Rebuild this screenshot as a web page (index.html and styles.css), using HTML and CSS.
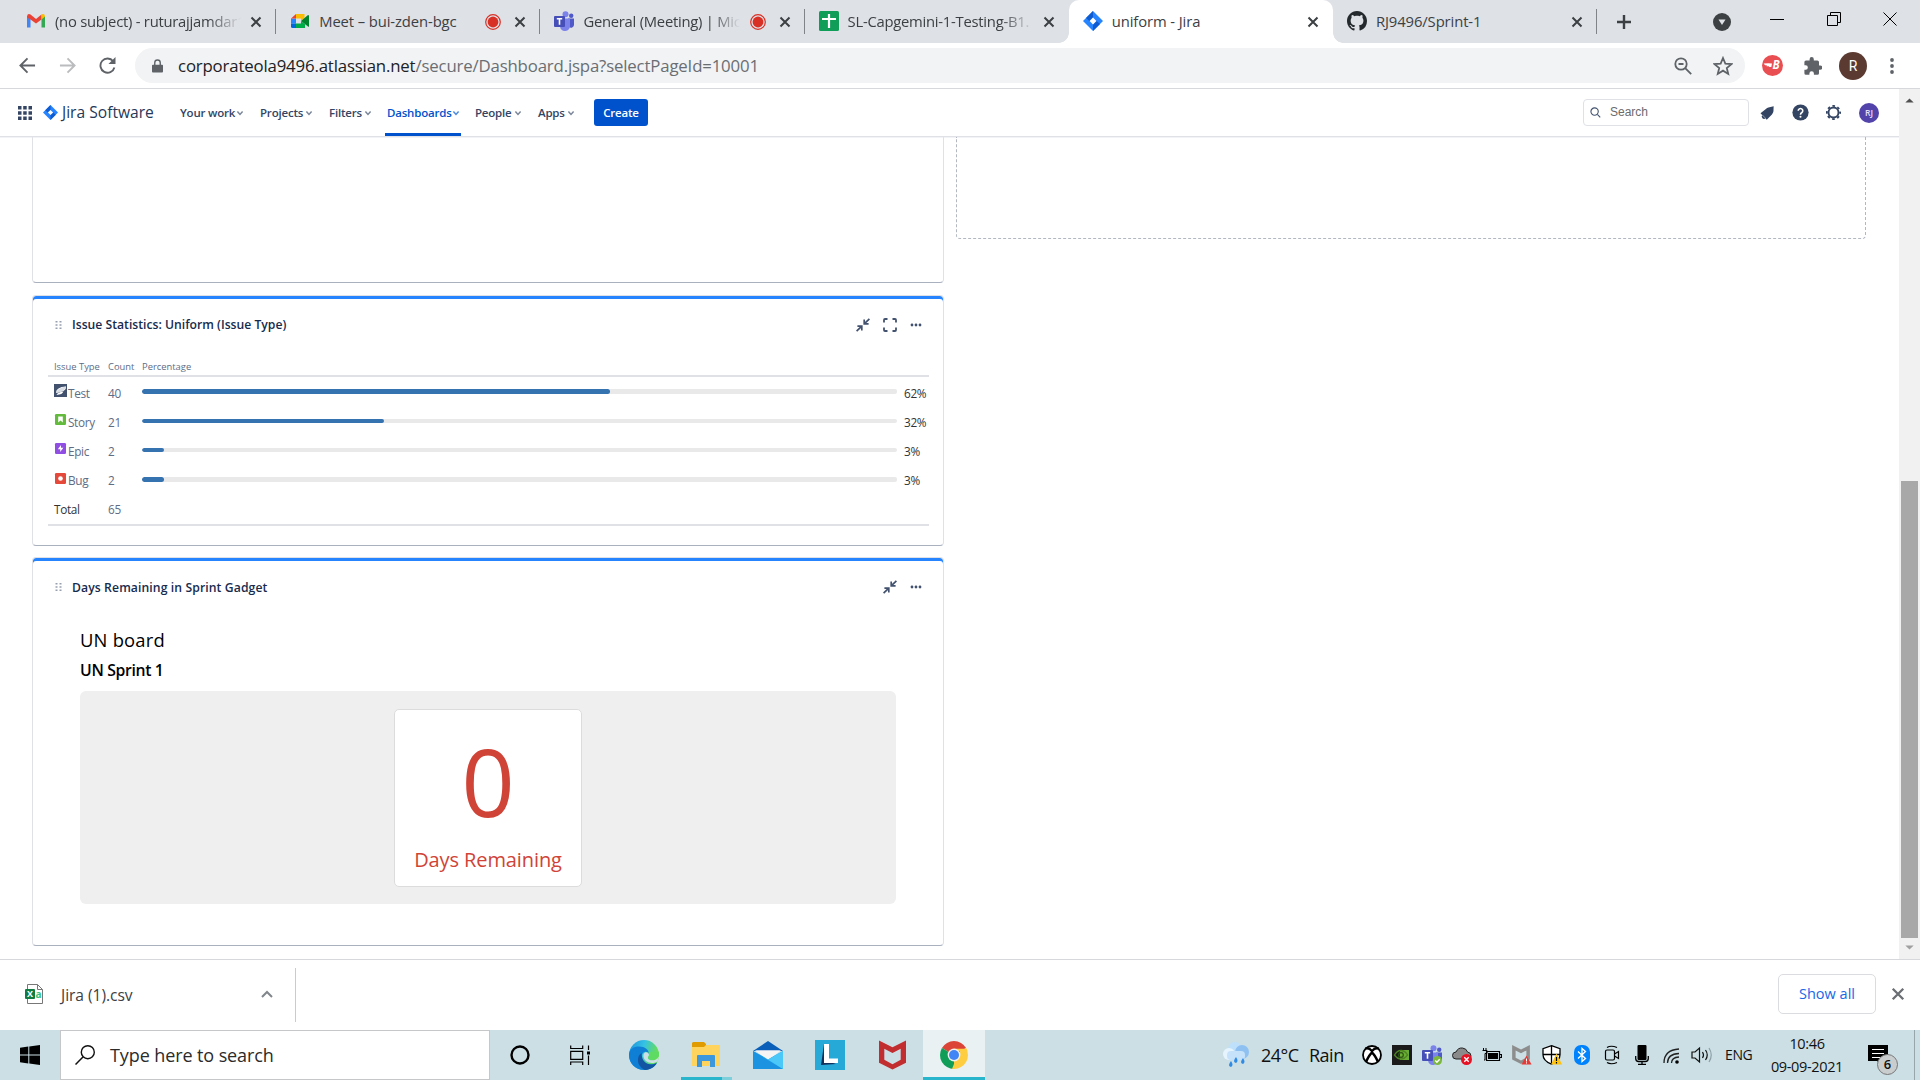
FILE: index.html
```html
<!DOCTYPE html>
<html lang="en">
<head>
<meta charset="utf-8">
<title>uniform - Jira</title>
<link rel="stylesheet" href="styles.css">
</head>
<body>
<svg class="defs" width="0" height="0">
  <defs>
    <symbol id="x" viewBox="0 0 12 12"><path d="M1.5 1.5l9 9M10.5 1.5l-9 9" fill="none" stroke="currentColor" stroke-width="2"/></symbol>
    <symbol id="rec" viewBox="0 0 18 18"><circle cx="9" cy="9" r="7.3" fill="none" stroke="#d93025" stroke-width="1.2"/><circle cx="9" cy="9" r="5.4" fill="#d93025"/></symbol>
    <symbol id="chev" viewBox="0 0 8 8"><path d="M1.4 2.6L4 5.4l2.6-2.8" fill="none" stroke="currentColor" stroke-width="1.5"/></symbol>
    <symbol id="jira" viewBox="0 0 20 20"><path d="M10 0l10 10-10 10L0 10z" fill="#2684ff"/><path d="M10 0v6.4L6.4 10 3 7z" fill="#0f5bd0"/><path d="M10 20v-6.4l3.6-3.6L17 13z" fill="#0f5bd0"/><path d="M10 6.6l3.4 3.4-3.4 3.4L6.6 10z" fill="#fff"/></symbol>
    <symbol id="collapse" viewBox="0 0 14 14"><path d="M13.400.8L9 5.200M8.200 1.600v4.200h4.400M.6 13.200L5 8.800M1.400 8.200h4.400v4.300" fill="none" stroke="#42526e" stroke-width="1.700"/></symbol>
    <symbol id="more" viewBox="0 0 12 4"><g fill="#42526e"><circle cx="2" cy="2" r="1.400"/><circle cx="6" cy="2" r="1.400"/><circle cx="10" cy="2" r="1.400"/></g></symbol>
    <symbol id="handle" viewBox="0 0 7 10"><g fill="#97a0af"><path d="M.5 1h2v1.500h-2zM4.500 1h2v1.500h-2zM.5 4.300h2v1.500h-2zM4.500 4.300h2v1.500h-2zM.5 7.600h2v1.500h-2zM4.500 7.600h2v1.500h-2z"/></g></symbol>
    <symbol id="teams" viewBox="0 0 20 20"><circle cx="17.200" cy="4.800" r="2.200" fill="#5059c9"/><circle cx="11.500" cy="3.200" r="3" fill="#7b83eb"/><path d="M14 7.500h6v6.500a3 3 0 0 1-5 2z" fill="#5059c9"/><path d="M6 7.500h10v7a5 5 0 0 1-10 1z" fill="#7b83eb"/><rect y="5" width="11" height="11" rx="1" fill="#464eb8"/><path d="M2.800 7.800h5.400M5.500 7.800v6" stroke="#fff" stroke-width="1.600"/></symbol>
    <symbol id="shieldm" viewBox="0 0 28 30"><path d="M0 0l14 7L28 0v23l-14 7-14-7z" fill="currentColor"/><path d="M5.500 8.500L14 13l8.500-4.500v11.500L14 24.500 5.500 20z" fill="var(--hole)"/></symbol>
  </defs>
</svg>

<div class="tabs">
  <div class="tab">
    <svg class="fav" viewBox="0 0 20 20"><path d="M1 16.500V5l3.500 2.500v9z" fill="#4285f4"/><path d="M15.500 7.500L19 5v11.500h-3.500z" fill="#34a853"/><path d="M1 5.500Q1.500 2 4.500 3.500L10 8l5.500-4.500v5L10 12.500l-5.500-4-3.500-2z" fill="#ea4335"/><path d="M15.500 3.500Q18.500 2 19 5.500l-3.500 3z" fill="#fbbc04"/></svg>
    <span class="name fade">(no subject) - ruturajjamdar1</span>
    <svg class="close"><use href="#x"/></svg>
  </div>
  <div class="tab">
    <svg class="fav" viewBox="0 0 20 20"><path d="M6 3h8.500v4L11 10V7.500H6z" fill="#fbbc04"/><path d="M1 7.500h5v5H1z" fill="#2684fc"/><path d="M6 3v4.500H1z" fill="#ea4335"/><path d="M1 12.500h5V17H2.500Q1 17 1 15.500z" fill="#0066da"/><path d="M6 12.500h5V10l4 3.300V17H6z" fill="#00ac47"/><path d="M11 10l7-6q1 0 1 1v10.500q-.5.500-1 0z" fill="#00832d"/></svg>
    <span class="name">Meet – bui-zden-bgc</span>
    <svg class="rec"><use href="#rec"/></svg>
    <svg class="close"><use href="#x"/></svg>
  </div>
  <div class="tab">
    <svg class="fav"><use href="#teams"/></svg>
    <span class="name fade">General (Meeting) | Mic</span>
    <svg class="rec"><use href="#rec"/></svg>
    <svg class="close"><use href="#x"/></svg>
  </div>
  <div class="tab nosep">
    <svg class="fav" viewBox="0 0 20 20"><rect width="20" height="20" rx="1.500" fill="#0f9d58"/><path d="M10 3v14M3 8h14" stroke="#fff" stroke-width="2.200"/></svg>
    <span class="name fade">SL-Capgemini-1-Testing-B1.</span>
    <svg class="close"><use href="#x"/></svg>
  </div>
  <div class="tab active">
    <svg class="fav"><use href="#jira"/></svg>
    <span class="name">uniform - Jira</span>
    <svg class="close"><use href="#x"/></svg>
  </div>
  <div class="tab">
    <svg class="fav" viewBox="0 0 16 16"><path fill="#24292e" d="M8 0C3.580 0 0 3.580 0 8c0 3.540 2.290 6.530 5.470 7.590.4.070.55-.17.55-.38 0-.19-.01-.82-.01-1.490-2.010.37-2.530-.49-2.690-.94-.09-.23-.48-.94-.82-1.130-.28-.15-.68-.52-.01-.53.63-.01 1.080.58 1.230.82.72 1.210 1.870.87 2.330.66.07-.52.28-.87.51-1.070-1.780-.2-3.640-.89-3.640-3.950 0-.87.31-1.590.82-2.150-.08-.2-.36-1.020.08-2.120 0 0 .67-.21 2.200.82.640-.18 1.320-.27 2-.27s1.360.09 2 .27c1.530-1.040 2.200-.82 2.200-.82.44 1.100.16 1.920.08 2.120.51.56.82 1.270.82 2.150 0 3.070-1.870 3.750-3.650 3.950.29.25.54.73.54 1.480 0 1.070-.01 1.930-.01 2.200 0 .21.150.46.55.38A8.010 8.010 0 0 0 16 8c0-4.420-3.580-8-8-8z"/></svg>
    <span class="name">RJ9496/Sprint-1</span>
    <svg class="close"><use href="#x"/></svg>
  </div>
  <svg class="plus" viewBox="0 0 16 16"><path d="M8 1v14M1 8h14" stroke="#3c4043" stroke-width="2.400"/></svg>
  <svg class="tabsearch" viewBox="0 0 18 18"><circle cx="9" cy="9" r="9" fill="#3c4043"/><path d="M5.500 6.500h7L9 12z" fill="#dee1e6"/></svg>
  <div class="winbtns">
    <svg viewBox="0 0 14 14"><path d="M0 7.500h14" stroke="#000"/></svg>
    <svg viewBox="0 0 14 14"><path d="M3.500 3V.5h10v10H11M.5 3.500h10v10H.5z" fill="none" stroke="#000"/></svg>
    <svg viewBox="0 0 14 14"><path d="M.5.5l13 13M13.500.5l-13 13" stroke="#000"/></svg>
  </div>
</div>

<div class="toolbar">
  <svg class="tb" viewBox="0 0 18 18"><path d="M17 9H2M9 1.500L1.500 9 9 16.500" fill="none" stroke="#5f6368" stroke-width="2"/></svg>
  <svg class="tb fwd" viewBox="0 0 18 18"><path d="M1 9h15M9 1.500L16.500 9 9 16.500" fill="none" stroke="#babcbe" stroke-width="2"/></svg>
  <svg class="tb reload" viewBox="0 0 18 18"><path d="M15 4.500A7.500 7.500 0 1 0 16.300 11" fill="none" stroke="#5f6368" stroke-width="2"/><path d="M17.500 0v7.500H10z" fill="#5f6368"/></svg>
  <div class="omnibox">
    <svg class="lock" viewBox="0 0 12 14"><path d="M1 5.500h10a1 1 0 0 1 1 1V13a1 1 0 0 1-1 1H1a1 1 0 0 1-1-1V6.500a1 1 0 0 1 1-1z" fill="#5f6368"/><path d="M3 6V3.500a3 3 0 0 1 6 0V6" fill="none" stroke="#5f6368" stroke-width="1.500"/></svg>
    <span class="url"><b>corporateola9496.atlassian.net</b>/secure/Dashboard.jspa?selectPageId=10001</span>
    <svg class="zoom" viewBox="0 0 18 18"><circle cx="7" cy="7" r="5.700" fill="none" stroke="#5f6368" stroke-width="1.800"/><path d="M11.200 11.200l6 6M4.500 7h5" stroke="#5f6368" stroke-width="1.800"/></svg>
    <svg class="star" viewBox="0 0 18 18"><path d="M9 1.800l2.100 5 5.500.5-4.200 3.500 1.300 5.300L9 13.200l-4.700 2.900 1.300-5.300-4.200-3.500 5.500-.5z" fill="none" stroke="#5f6368" stroke-width="1.600"/></svg>
  </div>
  <svg class="ext" viewBox="0 0 20 20"><circle cx="10" cy="10" r="10" fill="#e94e52"/><path d="M1.500 8.200q4-.6 8-.2l-.6 3.500H6.500l.4-.8H4.300l.4-.9H3z" fill="#fff"/><text x="10" y="13.800" class="blogo">B</text></svg>
  <svg class="puzzle" viewBox="0 0 18 18"><path d="M16.200 8.500H15V5a1.600 1.600 0 0 0-1.600-1.600H9.800V2.200a2.100 2.100 0 0 0-4.200 0v1.200H2A1.600 1.600 0 0 0 .4 5v3.300h1.200a2.200 2.200 0 0 1 0 4.500H.4v3.400a1.600 1.600 0 0 0 1.600 1.600h3.400v-1.200a2.200 2.200 0 0 1 4.500 0v1.200h3.500a1.600 1.600 0 0 0 1.600-1.600v-3.500h1.200a2.100 2.100 0 0 0 0-4.200z" fill="#5f6368"/></svg>
  <span class="me">R</span>
  <svg class="kebab" viewBox="0 0 4 18"><g fill="#5f6368"><circle cx="2" cy="3" r="1.900"/><circle cx="2" cy="9" r="1.900"/><circle cx="2" cy="15" r="1.900"/></g></svg>
</div>

<div class="viewport">
  <div class="page">
    <nav class="nav">
      <svg class="apps" viewBox="0 0 14 14"><path d="M0 0h3.500v3.500H0zM5.200 0h3.500v3.500H5.200zM10.500 0H14v3.500h-3.500zM0 5.200h3.500v3.500H0zM5.200 5.200h3.500v3.500H5.200zM10.500 5.200H14v3.500h-3.500zM0 10.500h3.500V14H0zM5.200 10.500h3.500V14H5.200zM10.500 10.500H14V14h-3.500z" fill="#344563"/></svg>
      <svg class="mark"><use href="#jira"/></svg>
      <span class="brand">Jira Software</span>
      <ul class="menu">
        <li class="work">Your work<svg><use href="#chev"/></svg></li>
        <li class="projects">Projects<svg><use href="#chev"/></svg></li>
        <li class="filters">Filters<svg><use href="#chev"/></svg></li>
        <li class="dash">Dashboards<svg><use href="#chev"/></svg></li>
        <li class="people">People<svg><use href="#chev"/></svg></li>
        <li class="appsmenu">Apps<svg><use href="#chev"/></svg></li>
      </ul>
      <button class="create">Create</button>
      <div class="search"><svg viewBox="0 0 12 12"><circle cx="5" cy="5" r="4" fill="none" stroke="#42526e" stroke-width="1.200"/><path d="M8 8l3.200 3.200" stroke="#42526e" stroke-width="1.200"/></svg>Search</div>
      <div class="navicons">
        <svg viewBox="0 0 18 18"><path d="M15.500 2.300L10 3.600Q8.500 4 7.300 5.200L1.600 9.800l6.600 6.800 5.500-5.600q1.400-1.400 1.600-3.200zM3.600 11.300l3.600 3.700q-2 1.600-3.600 0-1.600-1.700 0-3.700z" fill="#344563"/></svg>
        <svg viewBox="0 0 18 18"><circle cx="9" cy="9" r="8.600" fill="#344563"/><path d="M6.600 7.200a2.400 2.400 0 1 1 3.600 2.100Q9 10 9 11.300" fill="none" stroke="#fff" stroke-width="1.700"/><circle cx="9" cy="13.500" r="1.100" fill="#fff"/></svg>
        <svg viewBox="0 0 18 18"><circle cx="9" cy="9" r="5.300" fill="none" stroke="#344563" stroke-width="2"/><circle cx="9" cy="9" r="7" fill="none" stroke="#344563" stroke-width="1.900" stroke-dasharray="2.750" stroke-dashoffset="1.370"/></svg>
        <span class="rj">RJ</span>
      </div>
    </nav>
    <main class="board">
      <div class="col">
        <section class="card stub"></section>
        <section class="card stats">
          <header><svg class="handle"><use href="#handle"/></svg><h3 class="t1">Issue Statistics: Uniform (Issue Type)</h3>
            <svg class="act"><use href="#collapse"/></svg>
            <svg class="act" viewBox="0 0 14 14"><path d="M1 4.500V2q0-1 1-1h2.500M9.500 1H12q1 0 1 1v2.500M13 9.500V12q0 1-1 1H9.500M4.500 13H2q-1 0-1-1V9.500" fill="none" stroke="#42526e" stroke-width="1.800"/></svg>
            <svg class="more"><use href="#more"/></svg></header>
          <div class="table">
            <div class="row head"><span>Issue Type</span><span>Count</span><span>Percentage</span></div>
            <div class="row"><span class="type"><svg viewBox="0 0 13 13"><rect width="13" height="13" fill="#42526e"/><path d="M2 9Q2 3 12 2.500 12 7 7 7.500M2.500 11q1-3 7-3.500-1 3-7 3.500z" fill="#fff"/><path d="M2 9Q3 4 12 2.500 11 8 2 9z" fill="#d9dde4"/></svg>Test</span><span>40</span><span class="bar thick"><i style="width:62%"></i></span><span class="pct">62%</span></div>
            <div class="row"><span class="type"><svg viewBox="0 0 13 13"><rect x="1" y="1" width="11" height="11" rx="1.300" fill="#63ba3c"/><path d="M4.200 3.500h4.600v6L6.500 7.600 4.200 9.500z" fill="#fff"/></svg>Story</span><span>21</span><span class="bar"><i style="width:32%"></i></span><span class="pct">32%</span></div>
            <div class="row"><span class="type"><svg viewBox="0 0 13 13"><rect x="1" y="1" width="11" height="11" rx="1.300" fill="#904ee2"/><path d="M7 3v2.800h2.400L6.200 10V7.200H3.800z" fill="#fff"/></svg>Epic</span><span>2</span><span class="bar"><i style="width:2.900%"></i></span><span class="pct">3%</span></div>
            <div class="row"><span class="type"><svg viewBox="0 0 13 13"><rect x="1" y="1" width="11" height="11" rx="1.300" fill="#e5493a"/><circle cx="6.500" cy="6.500" r="2.300" fill="#fff"/></svg>Bug</span><span>2</span><span class="bar thick"><i style="width:2.900%"></i></span><span class="pct">3%</span></div>
            <div class="row total"><span>Total</span><span>65</span></div>
          </div>
        </section>
        <section class="card days">
          <header><svg class="handle"><use href="#handle"/></svg><h3 class="t2">Days Remaining in Sprint Gadget</h3>
            <svg class="act"><use href="#collapse"/></svg>
            <svg class="more"><use href="#more"/></svg></header>
          <div class="sprint">
            <h2>UN board</h2>
            <h4>UN Sprint 1</h4>
            <div class="panel"><div class="count"><span class="num">0</span><span class="cap">Days Remaining</span></div></div>
          </div>
        </section>
      </div>
      <div class="col drop"></div>
    </main>
  </div>
  <div class="scroll">
    <svg viewBox="0 0 10 6"><path d="M0 5.500L5 .5l5 5z" fill="#505050"/></svg>
    <div class="thumb"></div>
    <svg viewBox="0 0 10 6"><path d="M0 .5l5 5 5-5z" fill="#a0a0a0"/></svg>
  </div>
</div>

<div class="downloads">
  <div class="file">
    <svg viewBox="0 0 18 20"><path d="M2.500.5h10l5 5v14h-15z" fill="#fff" stroke="#777"/><path d="M12.500.5v5h5" fill="none" stroke="#777"/><rect y="5" width="10" height="10" rx="1" fill="#107c41"/><text x="2" y="13.200" class="xl">X</text><text x="10.500" y="13.500" class="xa">a</text></svg>
    <span>Jira (1).csv</span>
    <svg class="up" viewBox="0 0 12 8"><path d="M1 7l5-5 5 5" fill="none" stroke="#80868b" stroke-width="2"/></svg>
  </div>
  <button class="showall">Show all</button>
  <svg class="dx"><use href="#x"/></svg>
</div>

<div class="taskbar">
  <div class="start"><svg viewBox="0 0 20 20"><path d="M0 2.700L8.300 1.500v8H0zM9.300 1.400L20 0v9.500H9.300zM0 10.500h8.300v8L0 17.300zM9.300 10.500H20V20L9.300 18.600z"/></svg></div>
  <div class="wsearch"><svg viewBox="0 0 20 20"><circle cx="12.800" cy="7.200" r="6.500" fill="none" stroke="#111" stroke-width="1.400"/><path d="M8.200 11.800L.5 19.500" stroke="#111" stroke-width="1.500"/></svg><span>Type here to search</span></div>
  <div class="pins">
    <div class="c"><svg width="20" height="20" viewBox="0 0 20 20"><circle cx="10" cy="10" r="8.500" fill="none" stroke="#000" stroke-width="2.400"/></svg></div>
    <div class="c tv"><svg width="20" height="20" viewBox="0 0 20 20"><path d="M.7.500v3h12V.5M.7 6.300h12v8H.7zM.7 20v-3h12v3M18.500.5v4.500M18.500 10.500V20" fill="none" stroke="#000" stroke-width="1.200"/><rect x="17" y="6.500" width="3" height="3"/></svg></div>
    <div class="p"><svg width="30" height="30" viewBox="0 0 30 30"><defs><linearGradient id="e1" x2="1" y2=".3"><stop stop-color="#1b8fd8"/><stop offset=".5" stop-color="#35c1e6"/><stop offset="1" stop-color="#6be04b"/></linearGradient></defs><circle cx="15" cy="15" r="15" fill="url(#e1)"/><path d="M0 15C0 9 5 6.500 10 6.500c6 0 10 3 10 8-1-2.500-3-3-4.500-2.500-4 1.500-4 8 0 11 4 2.500 9 1.500 12.500-.5C25 27.500 20 30 15 30 6 30 0 23 0 15z" fill="#0f7fd6"/><path d="M12.500 13c-5 3-5.500 13 3.500 17 6-.2 10-3.500 12-7-6 3.500-15.500 1-15.500-10z" fill="#1155a3"/><path d="M16 12.500c2-1 4 .5 4 2.500 0 1.500-1.500 2-1 3.200 1 3 8 3.300 11-1.700-.3 2-1 4-1.500 5-5 2.500-9 1.500-11.500-.5-3-2.500-3.500-7-1-8.500z" fill="#cbdfe5"/><path d="M19 17.500c1 3 8 3.300 10.600-1.200.6-1.800.4-3.800.2-4.500L19.500 12c1 2 .8 3-.5 5.500z" fill="#5edb62"/></svg></div>
    <div class="p open"><svg width="28" height="26" viewBox="0 0 28 26"><path d="M1 0h11l2 2v5H0V1z" fill="#e09b00"/><path d="M0 5h12l2-2h14v21H0z" fill="#ffd45e"/><path d="M5 25V14q0-1 1-1h16q1 0 1 1v11h-5v-6h-8v6z" fill="#3c97dd"/></svg></div>
    <div class="p"><svg width="30" height="28" viewBox="0 0 30 28"><path d="M0 10L15 0l15 10z" fill="#0a5fb8"/><path d="M3 9.500h24L15 20z" fill="#f4f4f4"/><path d="M0 10l15 8 15-8v18H0z" fill="#30b4f0"/><path d="M2 9.500h26L15 18.500z" fill="#f4f4f4"/><path d="M0 10l30 18H0z" fill="#1c93e0"/><path d="M15 18.500L30 10v18z" fill="#4cc8f8"/></svg></div>
    <div class="p"><svg width="30" height="30" viewBox="0 0 30 30"><rect width="30" height="30" fill="#27a9d8"/><path d="M9 4L6 25l15-1-9-3z" fill="#12305c"/><path d="M9 4h5v14.500h9V23H9z" fill="#fff"/></svg></div>
    <div class="p mc"><svg width="27" height="30"><use href="#shieldm"/></svg></div>
    <div class="p cur"><svg width="28" height="28" viewBox="0 0 28 28"><path d="M14 14L1.900 7A14 14 0 0 1 26.100 7z" fill="#db4437"/><path d="M14 14L26.100 7A14 14 0 0 1 14 28z" fill="#ffcd40"/><path d="M14 14v14A14 14 0 0 1 1.900 7z" fill="#0f9d58"/><path d="M14 7.700h12.500a14 14 0 0 1 .9 2.300H18z" fill="#ffcd40"/><path d="M19.500 17L14 28h-2l3.500-9z" fill="#ffcd40"/><circle cx="14" cy="14" r="6.400" fill="#f1f1f1"/><circle cx="14" cy="14" r="5" fill="#4285f4"/></svg></div>
  </div>
  <div class="weather"><svg width="28" height="26" viewBox="0 0 28 26"><circle cx="13" cy="7" r="7" fill="#bfe0fa"/><circle cx="20" cy="10" r="7" fill="#8fc0f2"/><circle cx="7" cy="12" r="6" fill="#e6f4fe"/><rect x="5" y="9" width="18" height="9" rx="4" fill="#c6e2fa"/><path d="M9 19q3 4 0 6-4-1 0-6zM14 15q3 4 0 6-4-1 0-6zM21 16q3 4 0 6-4-1 0-6z" fill="#2f8be6"/></svg><span class="temp">24°C</span><span class="rain">Rain</span></div>
  <div class="tray">
    <div><svg width="20" height="20" viewBox="0 0 20 20"><circle cx="10" cy="10" r="9" fill="#fff" stroke="#000" stroke-width="1.800"/><path d="M4 17Q7 10 10 7.500 13 10 16 17M3.500 3.500Q7 2.500 10 6q3-3.500 6.500-2.500" fill="none" stroke="#000" stroke-width="2.400"/></svg></div>
    <div><svg width="20" height="20" viewBox="0 0 20 20"><rect width="20" height="20" fill="#1b1b1b"/><path d="M8 5h9v10H8z" fill="#6bae36"/><path d="M2.500 10q3-5 7-4.500 4 .5 6 4.500-3 4-6.500 4T2.500 10z" fill="none" stroke="#4c8423" stroke-width="1.400"/><circle cx="9" cy="10" r="2.300" fill="none" stroke="#2c5512" stroke-width="1.200"/></svg></div>
    <div><svg width="20" height="20" viewBox="0 0 20 20"><use href="#teams"/><circle cx="15.500" cy="15.500" r="4.500" fill="#7cb83f"/><path d="M13.300 15.600l1.600 1.600 2.800-3" fill="none" stroke="#fff" stroke-width="1.400"/></svg></div>
    <div><svg width="20" height="20" viewBox="0 0 20 20"><path d="M4 14a3.500 3.500 0 0 1 0-7q2-4.500 6.500-4 4 .5 5 4 3.500.5 3.500 4 0 3-3 3z" fill="#8a8a8a" stroke="#222"/><circle cx="14.500" cy="14.500" r="5.500" fill="#e81123"/><path d="M12.300 12.300l4.400 4.400m0-4.400l-4.400 4.400" stroke="#fff" stroke-width="1.400"/></svg></div>
    <div><svg width="20" height="20" viewBox="0 0 20 20"><path d="M4.500 6.500h13v9h-13zM18 9.500h1.500v3H18" fill="none" stroke="#000" stroke-width="1.200"/><path d="M6 8h10v6H6z"/><path d="M1.500 3v3M4 3v3M.5 5.500h4.500v3H3V15H2" fill="none" stroke="#000"/></svg></div>
    <div class="gray"><svg width="20" height="20" viewBox="0 0 20 20"><svg width="18" height="19"><use href="#shieldm"/></svg><path d="M14.500 10.500l5 9h-10z" fill="#e53935"/><path d="M14.500 13.500v3M14.500 17.300v1.200" stroke="#fff"/></svg></div>
    <div><svg width="20" height="20" viewBox="0 0 20 20"><path d="M9.500.7l8.500 3v6q0 6-8.500 9.500Q1 15.700 1 9.700v-6z" fill="#fff" stroke="#000" stroke-width="1.300"/><path d="M9.500 1v18M1 9.500h17" stroke="#000" stroke-width="1.300"/><path d="M14.500 8.500L20 19.500H9z" fill="#ffc20e"/><path d="M14.500 12v4M14.500 17v1.500" stroke="#000" stroke-width="1.200"/></svg></div>
    <div><svg width="16" height="20" viewBox="0 0 16 20"><rect width="16" height="20" rx="7" fill="#0082fc"/><path d="M4 6.500l7.500 7L8 16.500v-13l3.500 3-7.500 7" fill="none" stroke="#fff" stroke-width="1.300"/></svg></div>
    <div><svg width="16" height="20" viewBox="0 0 16 20"><rect x="1.500" y="5" width="9" height="10" rx="1.500" fill="none" stroke="#000" stroke-width="1.200"/><path d="M10.500 9l4-2.500v7l-4-2.500M3 2.500q4-2.500 10 0M3 17.500q4 2.500 10 0" fill="none" stroke="#000" stroke-width="1.200"/></svg></div>
    <div><svg width="14" height="20" viewBox="0 0 14 20"><rect x="2.500" width="9" height="15" rx="1"/><path d="M.7 11v2.500q0 3 3 3h6.600q3 0 3-3V11M7 16.500v3M3 19.500h8" fill="none" stroke="#000" stroke-width="1.300"/></svg></div>
    <div><svg width="18" height="18" viewBox="0 0 18 18"><g fill="none" stroke="#222" stroke-width="1.300"><path d="M1 17Q1 4 16 3"/><path d="M4.500 17q0-9 11.500-9.500"/><path d="M8.500 17q0-5.500 7.500-6"/></g><circle cx="14" cy="16" r="1.800"/></svg></div>
    <div><svg width="22" height="18" viewBox="0 0 22 18"><g fill="none" stroke="#111" stroke-width="1.200"><path d="M1 6h3l4.500-4v14L4 12H1z"/><path d="M11.500 6q2 3 0 6M14.500 4q3.500 5 0 10"/><path d="M18 2q4.500 7 0 14" stroke="#8da0a6"/></g></svg></div>
  </div>
  <span class="lang">ENG</span>
  <div class="clock"><span class="time">10:46</span><span class="date">09-09-2021</span></div>
  <div class="notif"><svg width="20" height="20" viewBox="0 0 20 20"><path d="M0 0h20v16H13v4l-4-4H0z"/><path d="M4 4.500h12M4 8.500h12M4 12.500h9" stroke="#fff" stroke-width="1.100"/></svg><span class="badge">6</span></div>
</div>
</body>
</html>
```
FILE: styles.css
```css
* { box-sizing: border-box; }
body {
  margin: 0; width: 1920px; height: 1080px; overflow: hidden;
  display: flex; flex-direction: column; background: #fff; color: #3c4043;
  font-family: "Open Sans", "Noto Sans", sans-serif;
}
.defs { position: absolute; }
svg { display: block; flex: none; }
span, h2, h3, h4 { white-space: nowrap; }
h2, h3, h4, ul { margin: 0; padding: 0; font-weight: 600; }
button { font-family: inherit; padding: 0; }

/* browser tabs */
.tabs { height: 43px; background: #dee1e6; display: flex; align-items: center; padding-left: 12px; flex: none; }
.tab { width: 264.200px; height: 43px; padding: 0 14px; display: flex; align-items: center; position: relative; }
.tab::after { content: ""; position: absolute; right: 0; top: 9px; width: 1px; height: 25px; background: #808388; }
.tab.nosep::after { display: none; }
.tab.active { background: #fff; border-radius: 10px 10px 0 0; }
.tab.active::before, .tab.active::after {
  content: ""; position: absolute; top: auto; bottom: 0; width: 10px; height: 10px;
}
.tab.active::before { left: -10px; background: radial-gradient(circle at 0 0, transparent 9.500px, #fff 10px); }
.tab.active::after { right: -10px; background: radial-gradient(circle at 100% 0, transparent 9.500px, #fff 10px); }
.fav { width: 20px; height: 20px; margin: 0 9px 1px 0; }
.name { flex: 1; overflow: hidden; font-size: 14.800px; letter-spacing: -.1px; line-height: 20px; margin: 0 9px 2px 0; }
.fade { -webkit-mask-image: linear-gradient(90deg, #000 82%, transparent); mask-image: linear-gradient(90deg, #000 82%, transparent); letter-spacing: -.25px; margin-right: 6px; }
.rec { width: 18px; height: 18px; margin-right: 12px; }
.fade + .rec { margin-left: 3px; }
.fade + .close { margin-left: 3px; }
.close { width: 12px; height: 12px; color: #3c4043; }
.plus { width: 16px; height: 16px; margin-left: 19px; }
.tabsearch { width: 18px; height: 18px; margin-left: 81px; }
.winbtns { display: flex; gap: 42.500px; margin: -6px 0 0 39px; }
.winbtns svg { width: 14px; height: 14px; }

/* toolbar */
.toolbar { height: 46px; border-bottom: 1px solid #d6d8db; display: flex; align-items: center; padding-left: 19px; flex: none; }
.tb { width: 17px; height: 17px; }
.fwd { margin-left: 23px; }
.reload { margin-left: 23px; }
.omnibox { margin-left: 19px; width: 1610px; height: 35px; border-radius: 18px; background: #f1f3f4; display: flex; align-items: center; padding-left: 17px; }
.lock { width: 11px; height: 14px; }
.url { margin-left: 15px; width: 1495px; font-size: 16.800px; letter-spacing: -.16px; color: #6a6e73; }
.url b { font-weight: 400; color: #202124; }
.zoom { width: 18px; height: 18px; margin-left: 1px; }
.star { width: 20px; height: 20px; margin-left: 21px; }
.ext { width: 21px; height: 21px; margin-left: 17px; }
.blogo { font: italic 700 11px "Open Sans", sans-serif; fill: #fff; }
.puzzle { width: 18px; height: 18px; margin-left: 21px; }
.me { width: 28px; height: 28px; margin-left: 17px; border-radius: 50%; background: #5b3a31; color: #fff; font: 14px/28px Roboto, sans-serif; text-align: center; }
.kebab { width: 4px; height: 18px; margin-left: 23px; }

/* page */
.viewport { height: 870px; display: flex; flex: none; }
.page { width: 1899px; display: flex; flex-direction: column; }
.nav { height: 48px; border-bottom: 1px solid #dfe1e6; box-shadow: 0 1px 0 #f1f3f6; display: flex; align-items: center; padding-left: 18px; flex: none; color: #344563; }
.apps { width: 14px; height: 14px; }
.mark { width: 15px; height: 15px; margin-left: 10.500px; }
.brand { width: 118px; margin: -2px 0 0 4.500px; font-size: 15.600px; line-height: 20px; letter-spacing: 0; color: #253858; }
.menu { display: flex; list-style: none; height: 47px; font-size: 11.500px; letter-spacing: -.2px; }
.menu li { display: flex; align-items: center; justify-content: space-between; height: 47px; margin-right: 16px; white-space: nowrap; }
.menu svg { width: 8px; height: 8px; color: #7a869a; }
.work { width: 64px; }
.projects { width: 53px; }
.filters { width: 43px; }
.menu .dash { width: 76px; padding: 3px 2px 0; margin: 0 14px 0 -3px; color: #0052cc; border-bottom: 3px solid #0052cc; }
.menu .dash svg { color: #4c8be0; }
.people { width: 47px; }
.appsmenu { width: 37px; }
.create { width: 54px; height: 27px; border: 0; border-radius: 3px; background: #0052cc; color: #fff; font-size: 11.500px; font-weight: 600; letter-spacing: -.2px; margin-left: 3px; }
.search { margin-left: auto; width: 166px; height: 27px; border: 1px solid #dfe1e6; border-radius: 4px; display: flex; align-items: center; gap: 9px; padding: 0 0 1px 6px; font: 12px "Liberation Sans", Arial, sans-serif; color: #6b6b6b; }
.search svg { width: 11px; height: 11px; }
.navicons { display: flex; align-items: center; gap: 16px; margin: 0 20px 0 10px; }
.navicons svg { width: 17px; height: 17px; }
.rj { width: 20px; height: 20px; margin-left: 1px; border-radius: 50%; background: #5243aa; color: #e4e0fa; font-size: 8.500px; font-weight: 600; line-height: 20px; text-align: center; }

.board { display: flex; gap: 12px; padding-left: 32px; align-items: flex-start; }
.col { width: 912px; display: flex; flex-direction: column; }
.card { border: 1px solid #dfe1e6; border-bottom-color: #a9b1bf; border-radius: 4px; overflow: hidden; }
.stub { height: 146px; border-top: 0; border-radius: 0 0 4px 4px; }
.stats, .days { box-shadow: inset 0 3px #2684ff; }
.stats { height: 251px; margin-top: 12px; }
.days { height: 389px; margin-top: 11px; }
.drop { height: 102px; width: 910px; border: 1px dashed #b3b8c0; border-top: 0; border-radius: 0 0 4px 4px; }
.card header { height: 57px; display: flex; align-items: center; padding: 0 21px 0 22px; }
.handle { width: 7px; height: 10px; }
.card h3 { flex: 1; margin-left: 10px; font-size: 12.200px; line-height: 20px; font-weight: 600; color: #172b4d; }
.card .t2 { letter-spacing: .1px; margin-top: 2px; }
.act { width: 14px; height: 14px; margin-right: 13px; }
.more { width: 12px; height: 4px; }

.table { margin: 6px 14px 0 15px; border-bottom: 2px solid #dfe1e6; height: 167px; font-size: 11.800px; color: #5e6c84; letter-spacing: -.35px; }
.row { display: grid; grid-template-columns: 54px 34px 755px 26px; height: 29.200px; align-items: center; padding-left: 6px; }
.row span { line-height: 16px; }
.head { height: 18px; padding-bottom: 3px; border-bottom: 2px solid #dfe1e6; margin-bottom: 1px; font-size: 9.400px; font-weight: 500; letter-spacing: 0; }
.type { display: flex; align-items: center; }
.type svg { width: 13px; height: 13px; margin: -4px 1px 0 0; }
.bar { height: 4px; margin-top: -2px; border-radius: 2px; background: #e9e9e9; overflow: hidden; }
.bar.thick { height: 5px; }
.bar i { display: block; height: 100%; border-radius: 3px; background: #3572b0; }
.pct { margin-left: 7px; color: #333; }
.total span:first-child { color: #333; }

.sprint { padding: 12px 47px 0; color: #000; }
.sprint h2 { font-size: 18.400px; line-height: 26px; font-weight: 500; letter-spacing: .2px; }
.sprint h4 { font-size: 15.800px; line-height: 24px; font-weight: 600; margin-top: 5px; letter-spacing: -.35px; }
.panel { height: 213px; width: 816px; margin-top: 9px; background: #efefef; border-radius: 6px; display: flex; align-items: center; justify-content: center; }
.count { width: 188px; height: 178px; background: #fff; border: 1px solid #dcdcdc; border-radius: 5px; display: flex; flex-direction: column; align-items: center; color: #d04437; }
.num { font-size: 93px; line-height: 100px; margin-top: 21px; }
.cap { font-size: 20px; line-height: 28px; margin-top: 15px; letter-spacing: -.1px; }

.scroll { width: 21px; background: #f1f1f1; display: flex; flex-direction: column; align-items: center; padding: 9px 0 9px; }
.scroll svg { width: 9px; height: 5px; }
.thumb { width: 17px; height: 457px; margin: auto 0 7px; background: #a8a8a8; }

/* downloads */
.downloads { height: 71px; border-top: 1px solid #d6d8db; display: flex; align-items: center; flex: none; padding-bottom: 1px; }
.file { width: 296px; height: 54px; padding-left: 25px; border-right: 1px solid #c9cbce; display: flex; align-items: center; font-size: 15.600px; letter-spacing: -.05px; }
.file svg { width: 18px; height: 20px; margin-top: -2px; }
.file span { margin-left: 18px; }
.file .up { width: 12px; height: 8px; margin-left: auto; margin-right: 22px; }
.xl { font: 700 9px "Open Sans", sans-serif; fill: #fff; }
.xa { font: 700 10px "Open Sans", sans-serif; fill: #33c481; }
.showall { margin: -2px 0 0 auto; width: 98px; height: 40px; border: 1px solid #dadce0; border-radius: 5px; background: #fff; color: #1a67e8; font-size: 14.500px; font-weight: 500; }
.dx { width: 14px; height: 14px; color: #6b6f73; margin: -2px 15px 0; }

/* taskbar */
.taskbar { height: 50px; background: #cbdfe5; display: flex; align-items: stretch; color: #111; flex: none; }
.taskbar > div, .pins > div, .tray > div { display: flex; align-items: center; }
.start { width: 60px; justify-content: center; }
.start svg { width: 20px; height: 20px; }
.wsearch { width: 430px; background: #fff; border: 1px solid #c5c7c8; padding-left: 14px; font-size: 18px; letter-spacing: -.1px; color: #2b2b2b; }
.wsearch svg { width: 20px; height: 20px; margin-right: 15px; }
.pins > div { justify-content: center; height: 50px; }
.pins .c { width: 60px; }
.pins .tv { margin-right: 3px; }
.pins .p { width: 62px; }
.mc { color: #c22d2f; --hole: #cbdfe5; }
.open { background: linear-gradient(90deg, transparent 6px, #29b6cd 6px 47px, #7ccfdb 47px 57px, transparent 57px) bottom / 100% 3px no-repeat; }
.cur { background: #e9f1f3; box-shadow: inset 0 -3px #29b6cd; }
.weather { width: 372px; padding-left: 237px; font-size: 18px; letter-spacing: -.5px; }
.temp { width: 48px; margin-left: 11px; flex: none; }
.tray > div { width: 30px; height: 50px; justify-content: center; }
.gray { color: #8d8d8d; --hole: #cbdfe5; }
.lang { width: 43px; padding-left: 8px; font-size: 14px; line-height: 50px; letter-spacing: -.4px; }
.taskbar .clock { width: 94px; flex-direction: column; align-items: center; font-size: 14.500px; line-height: 23px; padding-top: 2px; letter-spacing: -.35px; }
.notif { position: relative; margin-left: 14px; width: 47px; border-right: 1px solid #96a6ab; }
.badge { position: absolute; left: 9px; top: 24px; width: 21px; height: 21px; border: 1px solid #777; border-radius: 50%; background: #c9cdce; font-size: 13px; font-weight: 600; line-height: 19px; text-align: center; }
```
